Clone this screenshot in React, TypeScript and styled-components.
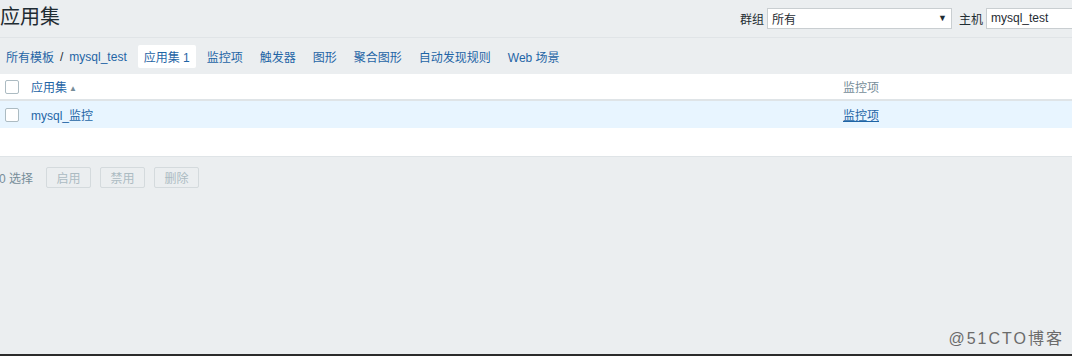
import React from "react";
import styled, { createGlobalStyle } from "styled-components";

const Global = createGlobalStyle`
  html, body { margin: 0; padding: 0; background: #ebeef0; }
  body { font-family: "Liberation Sans", "Noto Sans CJK SC", Arial, sans-serif; font-size: 12px; color: #1f2c33; }
  * { box-sizing: border-box; }
`;

const Page = styled.div`
  width: 1072px;
  height: 356px;
  display: flex;
  flex-direction: column;
  overflow: hidden;
  border-bottom: 2px solid #2b2b2b;
`;

const Header = styled.div`
  height: 38px;
  display: flex;
  align-items: center;
  justify-content: space-between;
  border-bottom: 1px solid #e0e4e7;
`;

const Title = styled.h1`
  margin: 0;
  font-size: 20px;
  font-weight: normal;
  color: #1f2c33;
  line-height: 24px;
  margin-top: -3px;
`;

const Filters = styled.div`
  display: flex;
  align-items: center;
  margin-top: -1px;
  margin-right: -12px;
`;

const Label = styled.span`
  color: #1f2c33;
  margin-right: 3px;
`;

const Select = styled.div`
  width: 185px;
  height: 21px;
  background: #fff;
  border: 1px solid #c9ced1;
  display: flex;
  align-items: center;
  justify-content: space-between;
  padding: 0 4px 0 4px;
  margin-right: 7px;
  font-size: 12px;
`;

const Arrow = styled.span`
  font-size: 9px;
  color: #1f2c33;
`;

const Input = styled.div`
  width: 98px;
  height: 21px;
  background: #fff;
  border: 1px solid #c9ced1;
  display: flex;
  align-items: center;
  padding: 0 4px;
  font-size: 12px;
`;

const Nav = styled.nav`
  height: 36px;
  display: flex;
  align-items: center;
  padding-left: 6px;
  padding-top: 1px;
`;

const NavLink = styled.a<{ $gap?: number }>`
  color: #1f65a6;
  text-decoration: none;
  margin-right: ${(p) => p.$gap ?? 17}px;
  white-space: nowrap;
`;

const Sep = styled.span`
  color: #1f2c33;
  margin: 0 6px 0 6px;
`;

const ActiveTab = styled.span`
  background: #fff;
  color: #1f65a6;
  padding: 3px 6px 3px 6px;
  margin-right: 11px;
  border-radius: 2px;
`;

const Table = styled.div`
  background: #fff;
  border-bottom: 1px solid #dfe4e7;
`;

const Row = styled.div<{ $bg?: string; $border?: string }>`
  height: 27px;
  display: flex;
  align-items: center;
  background: ${(p) => p.$bg ?? "#fff"};
  border-bottom: ${(p) => p.$border ?? "none"};
`;

const CheckCell = styled.div`
  width: 31px;
  padding-left: 5px;
  display: flex;
  align-items: center;
`;

const Box = styled.span`
  width: 14px;
  height: 14px;
  border: 1px solid #acbbc2;
  border-radius: 2px;
  background: #fff;
  display: inline-block;
`;

const NameCell = styled.div`
  width: 812px;
`;

const Cell = styled.div<{ $muted?: boolean }>`
  color: ${(p) => (p.$muted ? "#768d99" : "#1f65a6")};
`;

const Link = styled.a<{ $underline?: boolean }>`
  color: #1f65a6;
  text-decoration: ${(p) => (p.$underline ? "underline" : "none")};
`;

const SortArrow = styled.span`
  font-size: 8px;
  color: #768d99;
  margin-left: 2px;
  vertical-align: 1px;
`;

const Filler = styled.div`
  height: 28px;
`;

const Actions = styled.div`
  display: flex;
  align-items: center;
  padding-top: 10px;
`;

const Count = styled.span`
  color: #768d99;
  margin-left: -1px;
  margin-right: 13px;
`;

const Btn = styled.button`
  height: 21px;
  width: 45px;
  margin-right: 9px;
  border: 1px solid #d4dadd;
  background: #ebeef0;
  color: #acbbc2;
  font-family: inherit;
  font-size: 12px;
  padding: 0;
  border-radius: 2px;
`;

const Spacer = styled.div`
  flex: 1;
`;

const Footer = styled.div`
  display: flex;
  justify-content: flex-end;
  padding: 0 8px 5px 0;
`;

const Watermark = styled.span`
  font-size: 16px;
  letter-spacing: 2px;
  color: #6b6b6b;
  font-family: "Liberation Sans", "Noto Sans CJK SC", sans-serif;
`;

export default function App() {
  return (
    <>
      <Global />
      <Page>
        <Header>
          <Title>应用集</Title>
          <Filters>
            <Label>群组</Label>
            <Select>
              <span>所有</span>
              <Arrow>▼</Arrow>
            </Select>
            <Label>主机</Label>
            <Input>mysql_test</Input>
          </Filters>
        </Header>
        <Nav>
          <NavLink $gap={0}>所有模板</NavLink>
          <Sep>/</Sep>
          <NavLink $gap={11}>mysql_test</NavLink>
          <ActiveTab>应用集 1</ActiveTab>
          <NavLink>监控项</NavLink>
          <NavLink>触发器</NavLink>
          <NavLink>图形</NavLink>
          <NavLink>聚合图形</NavLink>
          <NavLink>自动发现规则</NavLink>
          <NavLink>Web 场景</NavLink>
        </Nav>
        <Table>
          <Row $border="2px solid #dfe4e7">
            <CheckCell>
              <Box />
            </CheckCell>
            <NameCell>
              <Link>应用集</Link>
              <SortArrow>▲</SortArrow>
            </NameCell>
            <Cell $muted>监控项</Cell>
          </Row>
          <Row $bg="#e8f5ff">
            <CheckCell>
              <Box />
            </CheckCell>
            <NameCell>
              <Link>mysql_监控</Link>
            </NameCell>
            <Cell>
              <Link $underline>监控项</Link>
            </Cell>
          </Row>
          <Filler />
        </Table>
        <Actions>
          <Count>0 选择</Count>
          <Btn disabled>启用</Btn>
          <Btn disabled>禁用</Btn>
          <Btn disabled>删除</Btn>
        </Actions>
        <Spacer />
        <Footer>
          <Watermark>@51CTO博客</Watermark>
        </Footer>
      </Page>
    </>
  );
}
